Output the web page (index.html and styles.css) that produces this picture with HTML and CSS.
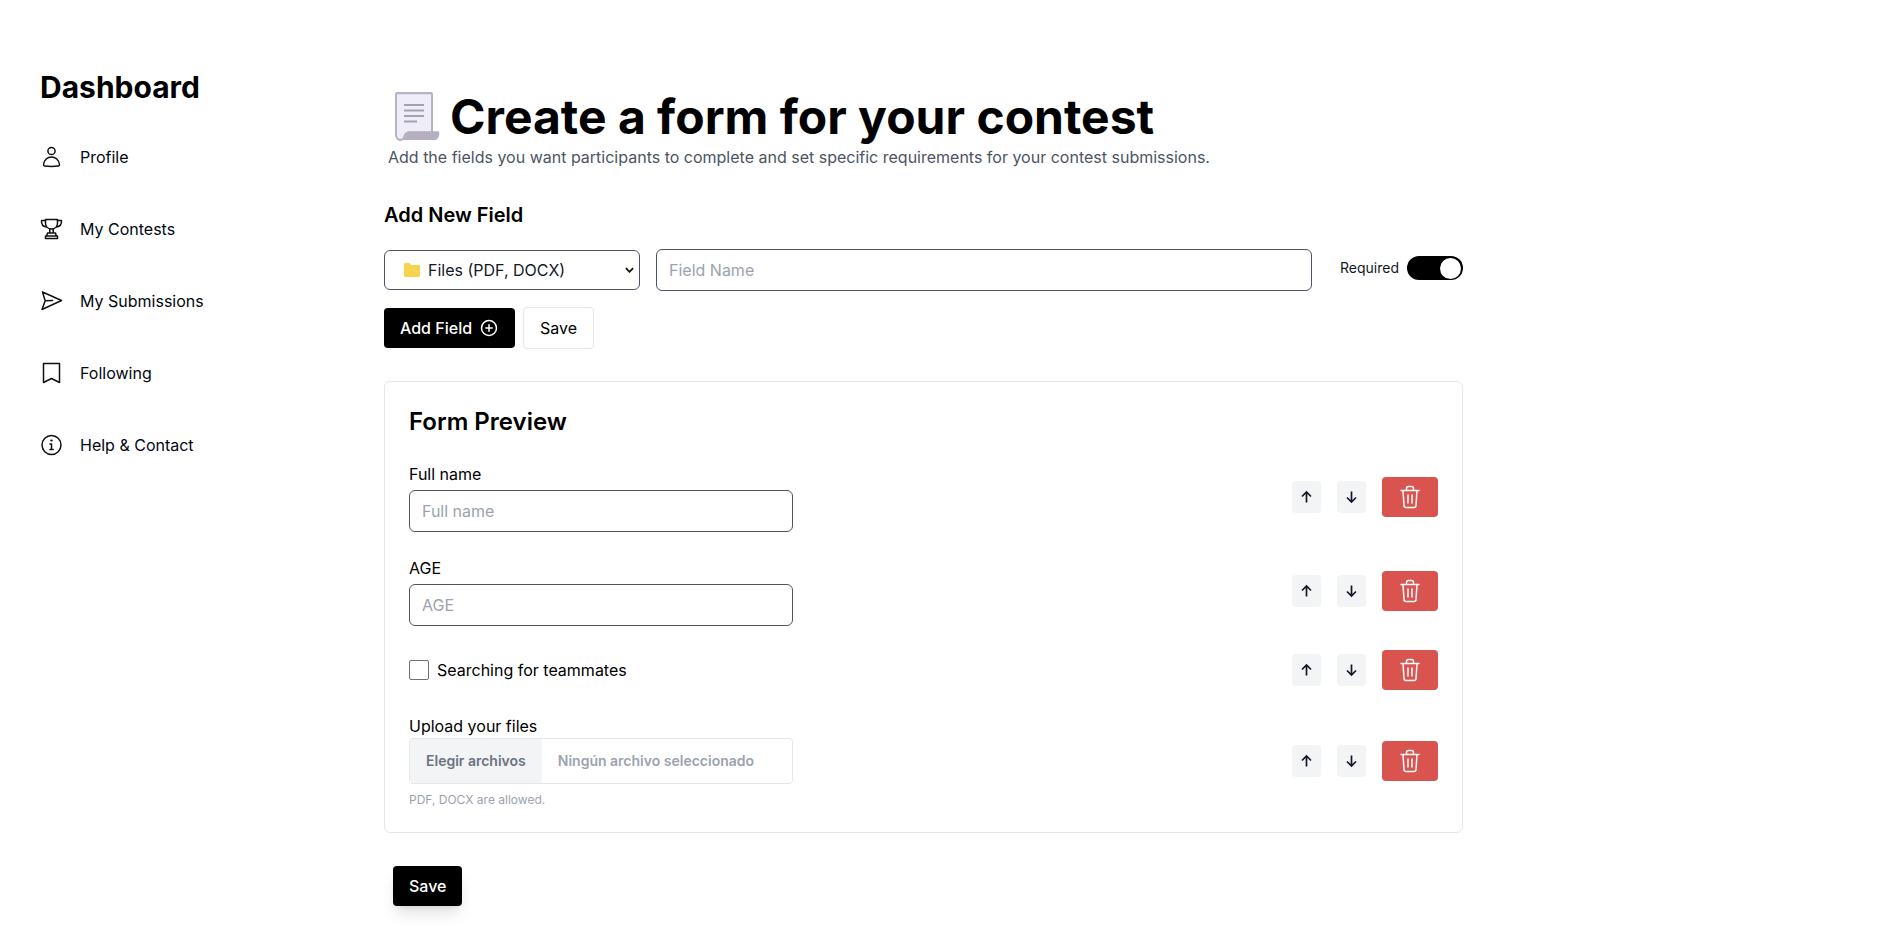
FILE: index.html
```html
<!DOCTYPE html>
<html lang="en">
<head>
<meta charset="utf-8">
<title>Create a form</title>
<link rel="stylesheet" href="styles.css">
</head>
<body>
<div class="page">
  <aside class="sidebar">
    <h2 class="brand">Dashboard</h2>
    <nav class="nav">
      <a class="nav-item"><svg class="nav-icon" viewBox="0 0 24 24"><circle cx="11.500" cy="6" r="3.600"/><path d="M11.500 12c-4 0-7.400 3-8 7.600-.1.900.3 1.400 1 1.500 4.700.6 9.300.6 14 0 .7-.1 1.100-.6 1-1.500-.6-4.600-4-7.600-8-7.600z"/></svg><span>Profile</span></a>
      <a class="nav-item"><svg class="nav-icon" viewBox="0 0 24 24"><path d="M5.500 2.500h12v3.500c0 3.500-2.500 6-6 6s-6-2.500-6-6V2.500z"/><path d="M5.500 3.500H1.500c-.2 3.500 1.500 6 4.800 6.500M17.500 3.500h4c.2 3.500-1.500 6-4.800 6.500"/><path d="M9.800 12v4h3.400v-4M7.500 16h8l.8 3H6.700zM5.500 19h12v2.500h-12z"/></svg><span>My Contests</span></a>
      <a class="nav-item"><svg class="nav-icon" viewBox="0 0 24 24"><path d="M2.500 3 21.500 11.500 2 20.500 5.200 11.800 2.500 3zM5.200 11.800 12.500 11.500"/></svg><span>My Submissions</span></a>
      <a class="nav-item"><svg class="nav-icon" viewBox="0 0 24 24"><path d="M3.500 2.500h16v19l-8-4-8 4v-19z"/></svg><span>Following</span></a>
      <a class="nav-item"><svg class="nav-icon" viewBox="0 0 24 24"><circle cx="11.500" cy="12" r="9.500"/><path d="M10 11h1.500v5.500M10 16.500h3.200"/><path class="dot" d="M11.300 7.500h.4"/></svg><span>Help &amp; Contact</span></a>
    </nav>
  </aside>
  <main class="main">
    <header class="head">
      <div class="title-row">
        <svg class="doc-icon" viewBox="0 2 46 45" preserveAspectRatio="none"><path class="doc-sheet" d="M3 3h34a1 1 0 0 1 1 1v36H13c-1 0-2 1-2.500 2.500-.5 2-2 3.500-4 3.500-2.500 0-4.500-2-4.500-5V4a1 1 0 0 1 1-1z"/><path class="doc-roll" d="M14 38h30c1.200 0 1.500 1 1.300 2.500C45 44 43 46 41 46H6.500c2.500 0 4.300-1.500 5-4 .4-1.800 1-4 2.500-4z"/><path class="doc-lines" d="M10 14h20M10 19h20M10 24h20M10 29h13"/></svg>
        <h1 class="title">Create a form for your contest</h1>
      </div>
      <p class="subtitle">Add the fields you want participants to complete and set specific requirements for your contest submissions.</p>
    </header>

    <section class="add">
      <h3 class="add-title">Add New Field</h3>
      <div class="add-row">
        <div class="select">
          <svg class="folder" viewBox="0 0 16 14"><path d="M0 1.500C0 .7.600 0 1.400 0h4.100l1.700 2H15c.6 0 1 .4 1 1v9.500c0 .8-.6 1.500-1.400 1.500H1.400C.6 14 0 13.300 0 12.500z"/></svg>
          <span class="select-text">Files (PDF, DOCX)</span>
          <svg class="chev" viewBox="0 0 10 6"><path d="M1 1l4 4 4-4"/></svg>
        </div>
        <input class="input input-name" placeholder="Field Name">
        <div class="req-group">
          <span class="req">Required</span>
          <span class="toggle"><span class="knob"></span></span>
        </div>
      </div>
      <div class="btn-row">
        <button class="btn btn-black">Add Field <svg class="plus" viewBox="0 0 20 20"><circle cx="10" cy="10" r="7.500"/><path d="M10 6.800v6.400M6.800 10h6.400"/></svg></button>
        <button class="btn btn-white">Save</button>
      </div>
    </section>

    <section class="card">
      <h2 class="card-title">Form Preview</h2>
      <div class="rows">
        <div class="row">
          <div class="field"><label class="label">Full name</label><input class="input input-field" placeholder="Full name"></div>
          <div class="actions">
            <button class="arrow"><svg viewBox="0 0 16 16"><path d="M7.500 13.500V3M3 7.500 7.500 3l4.500 4.500"/></svg></button>
            <button class="arrow"><svg viewBox="0 0 16 16"><path d="M7.500 2.500V13M3 8.500 7.500 13l4.500-4.500"/></svg></button>
            <button class="del"><svg viewBox="0 0 24 24"><path d="M3 5.500h18M8.500 5.500V3.500a2 2 0 0 1 2-2h3a2 2 0 0 1 2 2v2M5 5.500 6 20.500a2 2 0 0 0 2 2h8a2 2 0 0 0 2-2l1-15M10 10v8M14 10v8"/></svg></button>
          </div>
        </div>
        <div class="row">
          <div class="field"><label class="label">AGE</label><input class="input input-field" placeholder="AGE"></div>
          <div class="actions">
            <button class="arrow"><svg viewBox="0 0 16 16"><path d="M7.500 13.500V3M3 7.500 7.500 3l4.500 4.500"/></svg></button>
            <button class="arrow"><svg viewBox="0 0 16 16"><path d="M7.500 2.500V13M3 8.500 7.500 13l4.500-4.500"/></svg></button>
            <button class="del"><svg viewBox="0 0 24 24"><path d="M3 5.500h18M8.500 5.500V3.500a2 2 0 0 1 2-2h3a2 2 0 0 1 2 2v2M5 5.500 6 20.500a2 2 0 0 0 2 2h8a2 2 0 0 0 2-2l1-15M10 10v8M14 10v8"/></svg></button>
          </div>
        </div>
        <div class="row">
          <div class="check"><span class="box"></span><span>Searching for teammates</span></div>
          <div class="actions">
            <button class="arrow"><svg viewBox="0 0 16 16"><path d="M7.500 13.500V3M3 7.500 7.500 3l4.500 4.500"/></svg></button>
            <button class="arrow"><svg viewBox="0 0 16 16"><path d="M7.500 2.500V13M3 8.500 7.500 13l4.500-4.500"/></svg></button>
            <button class="del"><svg viewBox="0 0 24 24"><path d="M3 5.500h18M8.500 5.500V3.500a2 2 0 0 1 2-2h3a2 2 0 0 1 2 2v2M5 5.500 6 20.500a2 2 0 0 0 2 2h8a2 2 0 0 0 2-2l1-15M10 10v8M14 10v8"/></svg></button>
          </div>
        </div>
        <div class="row">
          <div class="field">
            <label class="label label-flush">Upload your files</label>
            <div class="file"><span class="file-btn">Elegir archivos</span><span class="file-none">Ningún archivo seleccionado</span></div>
            <p class="hint">PDF, DOCX are allowed.</p>
          </div>
          <div class="actions">
            <button class="arrow"><svg viewBox="0 0 16 16"><path d="M7.500 13.500V3M3 7.500 7.500 3l4.500 4.500"/></svg></button>
            <button class="arrow"><svg viewBox="0 0 16 16"><path d="M7.500 2.500V13M3 8.500 7.500 13l4.500-4.500"/></svg></button>
            <button class="del"><svg viewBox="0 0 24 24"><path d="M3 5.500h18M8.500 5.500V3.500a2 2 0 0 1 2-2h3a2 2 0 0 1 2 2v2M5 5.500 6 20.500a2 2 0 0 0 2 2h8a2 2 0 0 0 2-2l1-15M10 10v8M14 10v8"/></svg></button>
          </div>
        </div>
      </div>
    </section>
    <button class="btn btn-black btn-save">Save</button>
  </main>
</div>
</body>
</html>
```
FILE: styles.css
```css
* { box-sizing: border-box; }
html, body { margin: 0; padding: 0; background: #fff; overflow: hidden; }
body { font-family: Inter, "Liberation Sans", sans-serif; color: #000; font-size: 16px; height: 948px; }
.page { display: flex; align-items: flex-start; }
.sidebar { width: 384px; flex: none; padding: 67px 0 0 40px; }
.brand { margin: 0 0 38px; font-size: 30px; line-height: 40px; font-weight: 700; }
.nav { display: flex; flex-direction: column; gap: 48px; }
.nav-item { display: flex; align-items: center; gap: 16px; height: 24px; font-size: 16px; line-height: 24px; color: #030712; }
.nav-icon { width: 24px; height: 24px; fill: none; stroke: #111; stroke-width: 1.500; stroke-linejoin: round; stroke-linecap: round; }
.dot { stroke-width: 2.200; }

.main { width: 1080px; flex: none; padding-top: 88px; }
.head { margin-bottom: 32px; }
.title-row { display: flex; align-items: center; height: 57px; padding-left: 10px; gap: 10px; }
.doc-icon { width: 46px; height: 49px; flex: none; }
.doc-sheet { fill: #efedf7; stroke: #b8b2c2; stroke-width: 2; }
.doc-roll { fill: #b6afbf; }
.doc-lines { fill: none; stroke: #a7a0b3; stroke-width: 1.800; }
.title { margin: 0; font-size: 48px; line-height: 58px; font-weight: 700; letter-spacing: 0; white-space: nowrap; }
.subtitle { margin: 0; padding-left: 4px; font-size: 16px; line-height: 24px; color: #4b5563; white-space: nowrap; }

.add-title { margin: 0 0 20px; font-size: 20px; line-height: 28px; font-weight: 600; }
.add-row { display: flex; align-items: center; height: 42px; }
.select { width: 256px; height: 40px; margin-right: 16px; padding: 0 5px 0 19px; display: flex; align-items: center; border: 1px solid #4b5563; border-radius: 6px; font-size: 16px; color: #111827; }
.folder { width: 16px; height: 14px; fill: #f6d44f; flex: none; margin-right: 8px; }
.select-text { flex: 1; }
.chev { width: 9px; height: 6px; fill: none; stroke: #111; stroke-width: 2; }
.input { height: 42px; padding: 0 12px; border: 1px solid #4b5563; border-radius: 6px; font: 16px/24px Inter, "Liberation Sans", sans-serif; color: #111827; background: #fff; outline: none; }
.input::placeholder { color: #9ca3af; opacity: 1; }
.input-name { width: 656px; margin-right: 28px; }
.req-group { display: flex; align-items: center; margin-bottom: 4px; }
.req { font-size: 14px; line-height: 20px; margin-right: 8px; color: #111827; }
.toggle { width: 56px; height: 24px; border-radius: 12px; background: #000; display: flex; justify-content: flex-end; align-items: center; padding-right: 2px; }
.knob { width: 21px; height: 21px; border-radius: 50%; background: #fff; }

.btn-row { display: flex; align-items: center; gap: 8px; margin-top: 16px; }
.btn { font: 500 16px/24px Inter, "Liberation Sans", sans-serif; border-radius: 4px; cursor: pointer; }
.btn-black { height: 40px; padding: 0 16px; display: flex; align-items: center; gap: 7px; background: #000; color: #fff; border: 0; }
.btn-white { height: 42px; padding: 0 16px; background: #fff; color: #000; border: 1px solid #e5e7eb; font-weight: 400; }
.plus { width: 20px; height: 20px; fill: none; stroke: #fff; stroke-width: 1.500; stroke-linecap: round; }

.card { width: 1079px; margin-top: 32px; padding: 24px; border: 1px solid #e5e7eb; border-radius: 6px; }
.card-title { margin: 0 0 24px; font-size: 24px; line-height: 32px; font-weight: 600; }
.rows { display: flex; flex-direction: column; gap: 24px; }
.row { display: flex; justify-content: space-between; align-items: center; }
.field { width: 384px; display: flex; flex-direction: column; }
.label { font-size: 16px; line-height: 24px; margin-bottom: 4px; }
.label-flush { margin-bottom: 0; }
.input-field { width: 384px; }
.check { display: flex; align-items: center; gap: 8px; font-size: 16px; line-height: 24px; height: 40px; }
.box { width: 20px; height: 20px; border: 1px solid #6b7280; border-radius: 2px; background: #fff; }
.file { display: flex; align-items: stretch; height: 46px; border: 1px solid #e5e7eb; border-radius: 4px; font-size: 14px; font-weight: 600; overflow: hidden; }
.file-btn { background: #f3f4f6; color: #6b7280; padding: 0 16px 1px; display: flex; align-items: center; }
.file-none { color: #9ca3af; padding: 0 16px 1px; display: flex; align-items: center; }
.hint { margin: 8px 0 0; font-size: 12px; line-height: 16px; color: #9ca3af; }
.actions { display: flex; align-items: center; gap: 16px; }
.arrow { width: 29px; height: 32px; padding: 0; border: 0; border-radius: 4px; background: #f3f4f6; display: flex; align-items: center; justify-content: center; }
.arrow svg { width: 16px; height: 16px; fill: none; stroke: #111827; stroke-width: 1.700; }
.del { width: 56px; height: 40px; padding: 0; border: 0; border-radius: 4px; background: #d9534f; display: flex; align-items: center; justify-content: center; }
.del svg { width: 24px; height: 24px; fill: none; stroke: #fff; stroke-width: 1.500; stroke-linecap: round; stroke-linejoin: round; }
.btn-save { margin: 33px 0 0 9px; height: 40px; box-shadow: 0 10px 15px -3px rgba(0,0,0,.12), 0 4px 6px -4px rgba(0,0,0,.1); }
```
